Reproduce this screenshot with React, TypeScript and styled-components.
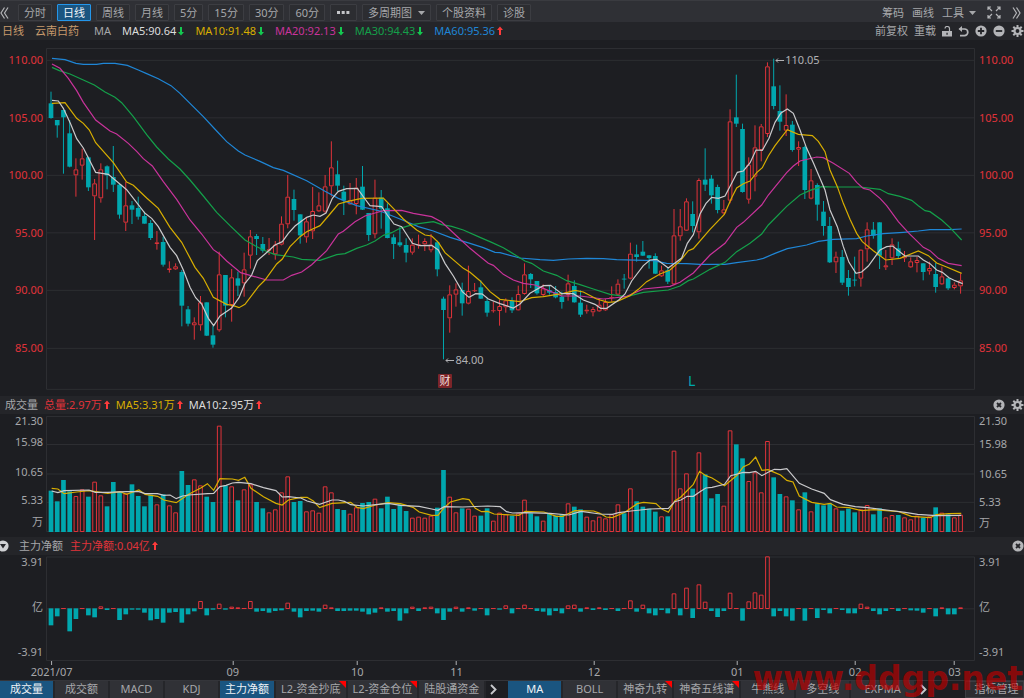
import React from "react";
import styled, { createGlobalStyle, css } from "styled-components";

const color = {
  page: "#1d1e22",
  bar: "#242529",
  tool: "#2f3035",
  tab: "#2c2d31",
  line: "#2d2e32",
  text: "#a6a7aa",
  red: "#e0333a",
  hot: "#ff3b3b",
  teal: "#00a7ae",
  white: "#dcdcdc",
  curve: "#cacacc",
  yellow: "#d8ae00",
  pink: "#c9339b",
  green: "#14a04a",
  blue: "#1f86d6",
  active: "#1a5580",
};

const GlobalStyle = createGlobalStyle`
  *, *::before, *::after { box-sizing: border-box; }
  body {
    margin: 0;
    background: ${color.page};
    color: ${color.text};
    font: 11px/16px "Noto Sans", "Noto Sans CJK SC", sans-serif;
    overflow-x: hidden;
  }
  button, a { font: inherit; color: inherit; text-decoration: none; white-space: nowrap; }
  svg { display: block; }
`;

/* ---------- data ---------- */

const FIRST_X = 153;
const STEP = 18.69;
const barX = (i: number) => FIRST_X + i * STEP;

// d = falling, u = rising; then high, body top, body bottom, low
const candleRows = `
d155,190,234,236 d240,240,256,293 d208,210,232,401 d240,280,380,382 u355,388,406,470 u326,355,377,419
d350,352,442,453 u417,430,469,600 u370,388,475,488 d376,379,406,448 d318,411,434,456 d432,434,524,536
u425,496,548,573 d483,496,509,552 d470,504,530,539 d515,528,551,551 d540,549,594,600 u573,607,612,629
d590,606,674,680 u664,685,690,698 u670,679,688,690 d690,696,797,859 d798,808,851,859 u832,847,856,899
u768,787,856,872 d787,787,887,888 d857,886,914,923 u635,703,871,875 d705,705,797,832 u687,712,795,845
d695,715,737,768 u638,688,730,770 u570,589,647,686 d582,588,597,645 d591,612,632,638 u594,628,632,645
u603,614,643,659 u529,551,614,616 u405,470,553,565 d449,477,510,542 d523,523,586,611 u532,544,592,608
u441,513,574,597 u457,496,514,516 u405,439,515,519 u304,382,439,470 d362,403,437,453 d437,455,481,525
u429,481,493,495 u414,443,492,523 d378,440,509,510 d519,519,585,603 u419,473,583,595 d450,473,506,566
d490,505,594,595 d583,592,612,657 d562,607,616,621 d595,615,638,667 u595,614,638,644 u584,613,616,626
u595,603,613,633 u582,614,631,637 d602,607,688,709 d770,776,810,958 u736,763,835,878 u730,748,764,800
d728,750,790,827 u677,753,791,793 u729,751,752,756 d721,742,776,777 d775,783,818,830 u785,811,812,818
u780,798,813,857 u775,781,802,818 d772,782,811,819 u737,762,811,812 u670,703,762,764 d699,702,718,744
d723,723,760,764 u733,745,765,769 d738,750,758,764 d738,756,772,775 d755,770,786,806 u704,730,765,782
d721,738,787,788 d751,788,824,831 u794,809,814,821 u801,807,817,829 u777,794,814,816 u777,786,811,813
u739,771,773,785 u718,731,764,767 d702,716,718,746 u608,641,716,718 d614,643,651,665 d603,635,647,648
d645,646,654,686 d640,648,701,702 u677,691,709,711 d682,691,725,732 u507,586,733,736 u507,559,589,602
u475,484,572,573 d484,522,558,577 u415,420,577,596 d325,419,434,453 d405,416,466,491 d434,441,510,520
u480,508,520,524 u208,244,482,490 d104,232,251,261 d251,267,456,458 u352,374,479,491 u256,322,410,454
u252,259,330,364 u67,79,282,291 d56,139,198,208 d136,213,245,272 u163,255,272,288 d243,254,330,335
u304,321,329,378 d317,321,450,477 u387,421,476,478 d430,435,494,542 d483,515,558,587 d531,558,667,669
u635,650,667,699 d630,651,728,735 d690,714,741,767 d650,719,721,739 u628,629,716,740 u547,568,628,665
d546,569,587,596 d547,547,647,687 u630,676,682,690 u595,613,655,675 d605,625,648,655 u633,648,655,666
u652,664,682,684 u650,660,669,697 d670,670,696,721 u665,684,694,704 d669,702,741,758 u680,709,733,735
d713,715,745,750 u727,734,744,748 u700,721,739,761`;

const candles = candleRows
  .trim()
  .split(/\s+/)
  .map((row) => {
    const [high, top, bottom, low] = row.slice(1).split(",").map(Number);
    return { up: row[0] === "u", high, top, bottom, low };
  });

const priceAverages = [
  {
    stroke: color.blue,
    points:
      "156,55 195,59 228,70 250,73 290,73 310,70 345,70 382,76 415,90 440,101 475,116 513,137 540,160 570,190 610,230 650,273 680,305 715,333 735,345 780,364 820,383 850,391 920,422 975,454 1015,475 1070,497 1140,513 1200,537 1255,560 1300,573 1350,592 1410,610 1450,623 1485,637 1500,638 1560,654 1620,659 1660,661 1705,657 1760,655 1810,656 1850,659 1960,662 2000,670 2060,671 2100,673 2175,673 2210,668 2270,660 2290,655 2325,640 2362,626 2420,615 2455,604 2500,598 2570,596 2600,588 2650,581 2710,577 2755,573 2790,569 2850,569 2885,567",
  },
  {
    stroke: color.green,
    points:
      "156,82 178,92 210,102 250,120 283,135 315,156 345,172 365,188 400,230 440,284 470,321 505,357 540,387 570,420 610,468 650,517 690,557 735,600 765,617 790,630 825,644 880,651 905,658 960,661 1010,644 1035,641 1070,625 1100,615 1125,603 1150,586 1175,578 1200,565 1240,553 1300,545 1325,554 1355,559 1390,570 1440,592 1475,607 1510,623 1575,663 1595,670 1630,693 1670,706 1700,722 1740,734 1780,747 1830,763 1880,770 1930,757 2005,750 2040,738 2065,722 2080,717 2130,688 2175,667 2210,635 2250,610 2285,582 2305,555 2360,499 2400,465 2430,451 2465,440 2500,441 2580,441 2640,448 2665,461 2700,469 2735,481 2755,497 2775,512 2790,515 2825,540 2850,563 2885,600",
  },
  {
    stroke: color.pink,
    points:
      "156,72 180,85 205,115 230,152 250,187 287,240 330,273 350,282 385,310 410,334 430,356 457,378 490,425 530,478 570,540 605,582 640,629 660,643 680,663 722,698 750,706 800,720 850,720 875,706 905,696 935,674 980,632 1015,582 1030,574 1065,545 1095,528 1125,519 1150,512 1205,511 1240,520 1295,530 1325,546 1370,588 1410,625 1465,670 1480,676 1510,703 1540,720 1570,730 1605,735 1630,745 1685,768 1740,768 1810,777 1840,774 1880,769 1930,747 2010,739 2040,727 2080,699 2130,645 2175,610 2210,562 2230,547 2285,495 2305,465 2360,398 2380,378 2400,363 2450,351 2470,353 2500,370 2548,400 2570,427 2590,445 2610,450 2640,475 2660,497 2695,545 2725,578 2770,622 2790,632 2815,655 2845,670 2885,677",
  },
  {
    stroke: color.yellow,
    points:
      "156,190 195,188 230,235 250,250 268,270 287,308 340,368 380,426 400,436 440,474 475,505 510,562 545,607 585,682 610,715 640,772 680,793 700,797 717,803 735,793 775,740 795,720 830,672 847,657 870,620 900,590 920,575 960,557 990,522 1015,492 1040,485 1085,475 1150,474 1180,505 1210,537 1250,570 1275,585 1295,588 1315,607 1335,638 1390,685 1410,697 1440,722 1470,755 1500,778 1560,785 1595,773 1630,770 1690,760 1725,751 1750,756 1790,777 1825,787 1850,785 1890,767 1915,748 1940,725 1980,702 2010,690 2040,663 2065,632 2080,626 2130,568 2173,523 2195,473 2210,444 2230,431 2250,423 2270,398 2287,383 2305,348 2325,317 2362,269 2395,283 2437,287 2455,304 2475,335 2490,390 2512,440 2530,490 2550,538 2570,580 2587,605 2620,632 2657,660 2700,655 2755,633 2785,647 2810,669 2840,681 2885,700",
  },
  {
    stroke: color.curve,
    points:
      "156,181 175,183 190,205 212,252 230,296 250,324 287,397 325,403 380,449 435,520 455,535 475,560 510,622 530,647 550,690 570,742 587,773 605,792 625,835 641,857 660,828 695,804 717,773 735,730 755,705 772,662 795,642 825,615 847,605 865,580 885,558 920,532 940,525 960,529 978,519 997,475 1015,454 1040,446 1072,445 1095,477 1110,497 1145,500 1162,525 1182,552 1205,560 1237,610 1260,617 1295,616 1315,630 1335,670 1360,708 1387,755 1407,772 1427,761 1447,762 1465,777 1500,791 1540,804 1560,792 1590,760 1630,737 1652,736 1685,761 1720,761 1750,780 1785,793 1802,805 1820,805 1855,781 1875,762 1895,723 1930,677 1950,660 1970,658 2005,684 2045,654 2062,610 2080,584 2100,522 2118,490 2135,472 2155,475 2175,468 2195,430 2212,397 2230,393 2250,369 2268,330 2287,331 2307,295 2325,247 2343,219 2362,207 2380,220 2400,270 2420,325 2440,368 2475,450 2490,510 2512,560 2530,620 2547,667 2568,700 2585,696 2605,678 2640,630 2660,620 2678,618 2715,648 2755,648 2770,660 2790,671 2810,690 2827,697 2847,713 2865,722 2888,731",
  },
];

const VOLUME_BASE = 411;
const volumeTops = [
  287, 319, 255, 289, 303, 283, 305, 260, 301, 334, 261, 291, 295, 268, 303, 334, 299, 328, 298, 331, 352, 228, 270, 253,
  271, 305, 321, 92, 272, 274, 316, 283, 268, 321, 340, 352, 343, 292, 244, 321, 318, 349, 346, 353, 274, 292, 342, 345,
  356, 337, 324, 321, 311, 340, 305, 342, 328, 348, 368, 365, 368, 362, 338, 225, 305, 352, 340, 341, 362, 362, 340, 377,
  353, 358, 362, 355, 314, 355, 364, 377, 355, 362, 358, 325, 335, 343, 365, 376, 365, 370, 358, 328, 355, 280, 319, 335,
  341, 350, 364, 364, 167, 280, 235, 281, 172, 238, 310, 297, 332, 106, 148, 190, 258, 232, 292, 138, 247, 297, 304, 316,
  343, 292, 349, 325, 331, 325, 340, 347, 341, 352, 343, 330, 358, 340, 367, 360, 360, 367, 373, 362, 368, 364, 337, 353,
  358, 367, 359,
];

// bar index, height on the volume scale
const volumeAverages = [
  {
    stroke: color.yellow,
    series:
      "0,280 1,282 2,296 4,291 6,287 9,295 11,290 12,298 14,285 15,298 17,304 18,315 20,323 22,298 24,278 25,266 26,286 27,251 29,252 30,256 31,247 32,280 34,305 36,325 37,330 38,315 40,307 41,307 42,318 43,338 45,325 48,322 49,337 50,341 52,330 54,323 56,326 58,337 59,351 61,361 62,361 63,338 64,321 66,311 67,314 68,340 69,350 70,349 71,357 75,361 76,349 79,351 81,364 82,364 84,347 87,348 88,355 89,366 90,368 92,352 94,326 95,322 97,326 98,343 99,352 100,318 101,306 103,268 104,229 105,242 106,249 108,272 110,241 111,216 112,207 113,186 114,226 115,224 116,232 117,240 118,256 119,261 120,303 122,322 124,328 125,325 126,336 128,338 130,347 132,344 136,350 138,364 141,368 142,359 144,356 146,355",
  },
  {
    stroke: color.curve,
    series:
      "0,288 1,293 2,287 6,285 7,292 9,292 12,290 14,290 15,296 17,296 18,301 19,300 20,311 21,303 22,300 25,296 26,295 27,275 28,271 29,264 30,262 32,266 34,278 36,287 37,306 38,305 40,309 41,318 43,328 45,315 46,315 47,319 48,329 50,333 52,329 54,325 56,331 59,334 61,342 62,346 63,335 66,336 70,333 72,335 73,350 74,354 76,353 80,355 83,360 85,349 88,357 90,358 91,353 93,348 96,342 99,340 100,320 101,315 102,304 103,304 104,291 105,279 106,277 108,268 109,242 111,232 112,233 113,229 114,242 115,232 116,223 117,224 118,221 120,265 122,282 124,295 125,314 127,328 129,335 131,338 134,345 137,352 139,358 142,362 146,361",
  },
];

const FLOW_BASE = 219;
const flows = [
  -51, -24, 1, -69, -32, 1, -21, -27, 6, -5, 1, -35, -18, -4, -4, -13, -36, -32, -43, -13, -11, -43, -18, -9, 22, -21, -4,
  14, -4, 5, 3, 1, 22, -10, -8, -13, -8, -6, 17, -10, -27, -8, -7, -10, 11, 3, -8, -8, -7, -7, -10, -18, -13, 3, -10, -8,
  -37, -15, 5, -8, 3, 5, -15, -35, -10, 5, -10, 3, -7, 1, -21, 1, -4, 9, -15, 1, 11, 1, -8, -10, -21, -8, -15, 9, 11, -10,
  3, -5, 3, -5, 1, -8, 1, 24, -10, 11, -15, -21, -5, -15, 45, -21, 62, -29, 72, 20, -8, -26, -8, 47, 1, -37, 21, 48, 41,
  156, -24, -8, -24, -37, 1, -37, 1, -29, -5, -15, 1, -5, -15, -15, 14, 5, -8, -18, -8, 1, -8, 1, -6, -7, -13, 1, -24, 3,
  -18, -18, 3,
];

const months = [
  { at: 0.6, label: "2021/07" },
  { at: 20.1, label: "09" },
  { at: 33.5, label: "10" },
  { at: 44.2, label: "11" },
  { at: 59, label: "12" },
  { at: 74.4, label: "01" },
  { at: 87.1, label: "02" },
  { at: 97.8, label: "03" },
];

/* ---------- frame ---------- */

const Page = styled.div`
  position: relative;
  display: flex;
  flex-direction: column;
  min-height: 100vh;
  overflow: hidden;
`;

const Toolbar = styled.header`
  display: flex;
  align-items: center;
  justify-content: space-between;
  height: 22px;
  padding: 2px 3px 0 0;
  background: ${color.tool};
  border-top: 1px solid #3a3b40;
`;

const Group = styled.div<{ $gap: number }>`
  display: flex;
  align-items: center;
  gap: ${(p) => p.$gap}px;
`;

const IconButton = styled.button`
  display: flex;
  padding: 0;
  border: 0;
  background: none;
  color: #b4b5b8;
`;

const PeriodButton = styled.button<{ $active?: boolean }>`
  display: flex;
  align-items: center;
  gap: 6px;
  height: 17px;
  padding: 0 5px;
  border: 1px solid ${(p) => (p.$active ? "#2496ea" : "#3c3d42")};
  border-radius: 1px;
  background: ${(p) => (p.$active ? color.active : "#2c2d31")};
  color: ${(p) => (p.$active ? "#f0f4f8" : color.text)};
`;

const MoreButton = styled(PeriodButton)`
  padding: 0 6px;
`;

const TextButton = styled.button`
  display: flex;
  align-items: center;
  gap: 5px;
  padding: 0;
  border: 0;
  background: none;
`;

const InfoBar = styled.div<{ $start: number }>`
  display: flex;
  align-items: center;
  justify-content: space-between;
  height: 18px;
  padding-left: ${(p) => p.$start}px;
  background: ${color.bar};
  white-space: nowrap;
`;

const Reading = styled.span<{ $color?: string }>`
  display: flex;
  align-items: center;
  gap: 2px;
  color: ${(p) => p.$color ?? color.text};
`;

const StudyName = styled.span`
  margin-left: 4px;
`;

const Panel = styled.section<{ $top: number; $bottom: number }>`
  display: grid;
  grid-template-columns: 46px 1fr 49px;
  padding: ${(p) => p.$top}px 0 ${(p) => p.$bottom}px;
`;

const Plot = styled.div`
  position: relative;
`;

const Canvas = styled.svg<{ $height: number }>`
  width: 100%;
  height: ${(p) => p.$height}px;

  line, rect, polyline { vector-effect: non-scaling-stroke; }
`;

const axisSide = css<{ $side: "left" | "right" }>`
  text-align: ${(p) => (p.$side === "left" ? "right" : "left")};
  padding-${(p) => (p.$side === "left" ? "right: 3px" : "left: 4px")};
`;

const PriceAxis = styled.div<{ $side: "left" | "right" }>`
  ${axisSide}
  display: flex;
  flex-direction: column;
  justify-content: space-between;
  margin: 4px 0 34px;
  color: ${color.red};
`;

const VolumeAxis = styled.div<{ $side: "left" | "right"; $rows: string }>`
  ${axisSide}
  display: grid;
  grid-template-rows: ${(p) => p.$rows};
  align-items: center;
`;

const FlowAxis = styled.div<{ $side: "left" | "right" }>`
  ${axisSide}
  display: flex;
  flex-direction: column;
  justify-content: space-between;
  margin-bottom: 3px;
  line-height: 12px;
`;

const Callout = styled.span<{ $left: string; $top: number }>`
  position: absolute;
  left: ${(p) => p.$left};
  top: ${(p) => p.$top}px;
  display: flex;
  align-items: center;
  gap: 1px;
  color: #b0b1b4;
`;

const ReportBadge = styled.a`
  position: absolute;
  left: 42.2%;
  top: 326px;
  width: 14px;
  height: 14px;
  border-radius: 1px;
  background: #7c2529;
  color: #f0dcdc !important;
  line-height: 14px;
  text-align: center;
`;

const EventMark = styled.a`
  position: absolute;
  left: 69.1%;
  top: 325px;
  color: ${color.teal} !important;
  font-size: 14px;
`;

const TimeAxis = styled.div`
  position: relative;
  height: 19px;
  margin: 0 49px 0 46px;
`;

const Month = styled.span<{ $at: number }>`
  position: absolute;
  left: ${(p) => p.$at}%;
  display: flex;
  flex-direction: column;
  align-items: center;
  transform: translateX(-50%);
  line-height: 14px;

  &::before {
    content: "";
    width: 1px;
    height: 4px;
    background: #b0b1b4;
  }
`;

const Footer = styled.footer`
  display: flex;
  height: 18px;
  border-top: 1px solid #34353a;
`;

const TabList = styled.nav<{ $gapAfter?: boolean }>`
  display: flex;
  align-items: stretch;
  margin-right: ${(p) => (p.$gapAfter ? 7 : 0)}px;
`;

const Tab = styled.button<{ $active?: boolean; $wide?: boolean }>`
  position: relative;
  min-width: ${(p) => (p.$wide ? 65 : 55)}px;
  padding: 0 5px 2px;
  border: 0;
  border-right: 2px solid #25262a;
  background: ${(p) => (p.$active ? color.active : "#303136")};
  color: ${(p) => (p.$active ? "#eef2f6" : color.text)};
  line-height: 15px;
`;

const HotCorner = styled.i`
  position: absolute;
  top: 0;
  right: 0;
  border-top: 7px solid #ff0000;
  border-left: 7px solid transparent;
`;

const NextButton = styled(IconButton)`
  width: 15px;
  align-items: center;
  justify-content: center;
`;

const ManageButton = styled.button`
  margin-left: auto;
  width: 59px;
  padding: 0 4px 1px 8px;
  border: 1px solid #3c3d42;
  background: #2c2d31;
  line-height: 14px;
`;

const Watermark = styled.div`
  position: absolute;
  right: 1px;
  bottom: 0;
  color: rgba(190, 0, 0, 0.68);
  font: bold 33px/38px "DejaVu Sans", sans-serif;
  pointer-events: none;
`;

/* ---------- icons ---------- */

const Trend = ({ up }: { up?: boolean }) => (
  <svg width="6" height="10" viewBox="0 0 6 10" fill={up ? color.hot : "#14c850"}>
    <path d={up ? "M3 0.5 6 4H4v5H2V4H0z" : "M3 9.5 6 6H4V1H2v5H0z"} />
  </svg>
);

const Caret = () => (
  <svg width="7" height="4" viewBox="0 0 7 4" fill="currentColor">
    <path d="M0 0h7L3.5 4z" />
  </svg>
);

const DoubleChevron = ({ left }: { left?: boolean }) => (
  <svg width="9" height="12" viewBox="0 0 9 12" fill="none" stroke="currentColor" strokeWidth="1.2">
    <path d={left ? "M4.5 .5 1 6l3.500 5.500M8 .5 4.500 6 8 11.500" : "M1 .5 4.500 6 1 11.500M4.500 .5 8 6l-3.500 5.500"} />
  </svg>
);

const Chevron = () => (
  <svg width="7" height="11" viewBox="0 0 7 11" fill="none" stroke="#c8c9cc" strokeWidth="1.900">
    <path d="M1 1l4.500 4.500L1 10" />
  </svg>
);

const Dots = () => (
  <svg width="13" height="3" viewBox="0 0 13 3" fill="#c4c5c8">
    <path d="M0 0h3v3H0zM4.700 0h3v3h-3zM9.400 0h3v3h-3z" />
  </svg>
);

const Expand = () => (
  <svg width="14" height="13" viewBox="0 0 14 13" fill="none" stroke="currentColor" strokeWidth="1.200">
    <path d="M1 4V1h3M1 1l4 4M10 1h3v3M13 1 9 5M1 9v3h3M1 12l4-4M10 12h3V9M13 12 9 8" />
  </svg>
);

const Lock = () => (
  <svg width="10" height="11" viewBox="0 0 10 11">
    <path d="M3 2.500a2.200 2.200 0 0 1 4.500.5v2" fill="none" stroke="currentColor" strokeWidth="1.200" />
    <path d="M0 5h10v5.500H0z" fill="currentColor" />
    <path d="M4.400 6.800h1.300v2H4.400z" fill={color.bar} />
  </svg>
);

const Undo = () => (
  <svg width="11" height="11" viewBox="0 0 11 11" fill="none" stroke="currentColor" strokeWidth="1.700">
    <path d="M1.500 3h5a3.300 3.300 0 0 1 0 6.600H2" />
    <path d="M4 0 .5 3 4 6z" fill="currentColor" stroke="none" />
  </svg>
);

const Round = ({ mark }: { mark: string }) => (
  <svg width="12" height="12" viewBox="0 0 12 12">
    <circle cx="6" cy="6" r="5.600" fill="currentColor" />
    <path d={mark} fill="none" stroke={color.bar} strokeWidth="1.800" />
  </svg>
);

const PLUS = "M6 2.800v6.400M2.800 6h6.400";
const MINUS = "M2.800 6h6.400";
const CROSS = "M4 4l4 4M8 4 4 8";

const Collapse = () => (
  <svg width="9" height="12" viewBox="3 0 9 12">
    <circle cx="6" cy="6" r="5.600" fill="#d0d1d4" />
    <path d="M3 4h6L6 8.500z" fill={color.bar} />
  </svg>
);

const Gear = () => (
  <svg width="13" height="12" viewBox="-6.500 -6 13 12" stroke="currentColor">
    <circle r="3" fill="none" strokeWidth="2.200" />
    <path
      d="M0-3.500V-6M0 3.500V6M-3.500 0H-6M3.500 0H6M-2.500-2.500-4.200-4.200M2.500 2.500 4.200 4.200M-2.500 2.500-4.200 4.200M2.500-2.500 4.200-4.200"
      strokeWidth="2"
    />
  </svg>
);

const CalloutArrow = () => (
  <svg width="9" height="5" viewBox="0 0 9 5" fill="none" stroke="currentColor">
    <path d="M9 2.500H1M3 .5 1 2.500l2 2" />
  </svg>
);

/* ---------- charts ---------- */

const Frame = ({ top, bottom, rows }: { top: number; bottom: number; rows: number[] }) => (
  <g stroke={color.line} fill="none">
    <rect x="139.500" y={top} width="2784" height={bottom - top} strokeWidth="1" />
    {rows.map((y) => (
      <line key={y} x1="139" x2="2922" y1={y} y2={y} />
    ))}
  </g>
);

const Bar = ({ i, up, top, bottom }: { i: number; up: boolean; top: number; bottom: number }) =>
  up && bottom - top > 3 ? (
    <rect
      x={barX(i) - 5.5}
      width="11"
      y={top + 1.5}
      height={Math.max(bottom - top - 3, 1)}
      fill="none"
      stroke={color.red}
      strokeWidth="1"
    />
  ) : (
    <rect x={barX(i) - 7} width="14" y={top} height={Math.max(bottom - top, 2.5)} fill={up ? color.red : color.teal} />
  );

const PriceChart = () => (
  <Canvas $height={342} viewBox="138 24 2787 1026" preserveAspectRatio="none" role="img" aria-label="日线">
    <Frame top={25.5} bottom={1048} rows={[61, 233.5, 406, 578.5, 751, 925]} />
    {candles.map((c, i) => (
      <g key={i}>
        <g stroke={c.up ? color.red : color.teal}>
          <line x1={barX(i)} x2={barX(i)} y1={c.high} y2={c.up ? c.top : c.low} />
          {c.up && <line x1={barX(i)} x2={barX(i)} y1={c.bottom} y2={c.low} />}
        </g>
        <Bar i={i} up={c.up} top={c.top} bottom={c.bottom} />
      </g>
    ))}
    {priceAverages.map((a) => (
      <polyline key={a.stroke} points={a.points} fill="none" stroke={a.stroke} strokeWidth="1.2" />
    ))}
  </Canvas>
);

const VolumeChart = () => (
  <Canvas $height={116} viewBox="138 63 2787 348" preserveAspectRatio="none" role="img" aria-label="成交量">
    <Frame top={64.5} bottom={409.5} rows={[148.5, 237, 322]} />
    {volumeTops.map((top, i) => (
      <Bar key={i} i={i} up={candles[i].up} top={top} bottom={VOLUME_BASE} />
    ))}
    {volumeAverages.map((a) => (
      <polyline
        key={a.stroke}
        points={a.series
          .split(" ")
          .map((p) => p.split(",").map(Number))
          .map(([i, y]) => `${barX(i) + 2},${y}`)
          .join(" ")}
        fill="none"
        stroke={a.stroke}
        strokeWidth="1.2"
      />
    ))}
  </Canvas>
);

const FlowChart = () => (
  <Canvas $height={105} viewBox="138 62 2787 315" preserveAspectRatio="none" role="img" aria-label="主力净额">
    <Frame top={65} bottom={375.5} rows={[220.5]} />
    {flows.map((v, i) => (
      <Bar key={i} i={i} up={v > 0} top={v > 0 ? FLOW_BASE - v : FLOW_BASE} bottom={v > 0 ? FLOW_BASE + 2 : FLOW_BASE - v} />
    ))}
  </Canvas>
);

const Labels = ({ values }: { values: string[] }) => (
  <>
    {values.map((v) => (
      <span key={v}>{v}</span>
    ))}
  </>
);

const prices = ["110.00", "105.00", "100.00", "95.00", "90.00", "85.00"];
const volumes = ["21.30", "15.98", "10.65", "5.33", "万"];
const flowScale = ["3.91", "亿", "-3.91"];
const periods = ["分时", "日线", "周线", "月线", "5分", "15分", "30分", "60分"];

const studies = [
  { name: "成交量", active: true },
  { name: "成交额" },
  { name: "MACD" },
  { name: "KDJ" },
  { name: "主力净额", active: true },
  { name: "L2-资金抄底", hot: true },
  { name: "L2-资金仓位", hot: true },
  { name: "陆股通资金" },
];

const overlays = [
  { name: "MA", active: true },
  { name: "BOLL" },
  { name: "神奇九转", hot: true },
  { name: "神奇五线谱", hot: true },
  { name: "牛熊线" },
  { name: "多空线" },
  { name: "EXPMA", wide: true },
];

type TabItem = { name: string; active?: boolean; hot?: boolean; wide?: boolean };

const Tabs = ({ items, gapAfter }: { items: TabItem[]; gapAfter?: boolean }) => (
  <TabList $gapAfter={gapAfter}>
    {items.map((t) => (
      <Tab key={t.name} $active={t.active} $wide={t.wide}>
        {t.name}
        {t.hot && <HotCorner />}
      </Tab>
    ))}
    <NextButton aria-label="更多">
      <Chevron />
    </NextButton>
  </TabList>
);

export default function App() {
  return (
    <Page>
      <GlobalStyle />
      <Toolbar>
        <Group $gap={9}>
          <IconButton aria-label="收起">
            <DoubleChevron left />
          </IconButton>
          <Group $gap={5}>
            {periods.map((p) => (
              <PeriodButton key={p} $active={p === "日线"}>
                {p}
              </PeriodButton>
            ))}
            <MoreButton aria-label="更多周期">
              <Dots />
            </MoreButton>
            <PeriodButton>
              多周期图
              <Caret />
            </PeriodButton>
            <PeriodButton>个股资料</PeriodButton>
            <PeriodButton>诊股</PeriodButton>
          </Group>
        </Group>
        <Group $gap={11}>
          <Group $gap={8}>
            <TextButton>筹码</TextButton>
            <TextButton>画线</TextButton>
            <TextButton>
              工具
              <Caret />
            </TextButton>
          </Group>
          <IconButton aria-label="全屏">
            <Expand />
          </IconButton>
          <IconButton aria-label="展开">
            <DoubleChevron />
          </IconButton>
        </Group>
      </Toolbar>

      <InfoBar $start={2}>
        <Group $gap={11}>
          <Reading $color="#c79a6c">日线</Reading>
          <Reading $color="#c79a6c">云南白药</Reading>
          <StudyName>MA</StudyName>
          <Reading $color={color.white}>MA5:90.64<Trend /></Reading>
          <Reading $color={color.yellow}>MA10:91.48<Trend /></Reading>
          <Reading $color={color.pink}>MA20:92.13<Trend /></Reading>
          <Reading $color={color.green}>MA30:94.43<Trend /></Reading>
          <Reading $color={color.blue}>MA60:95.36<Trend up /></Reading>
        </Group>
        <Group $gap={6}>
          <TextButton>前复权</TextButton>
          <TextButton>重载</TextButton>
          <IconButton aria-label="锁定"><Lock /></IconButton>
          <IconButton aria-label="撤销"><Undo /></IconButton>
          <IconButton aria-label="放大"><Round mark={PLUS} /></IconButton>
          <IconButton aria-label="缩小"><Round mark={MINUS} /></IconButton>
          <IconButton aria-label="设置"><Gear /></IconButton>
        </Group>
      </InfoBar>

      <Panel $top={8} $bottom={6}>
        <PriceAxis $side="left"><Labels values={prices} /></PriceAxis>
        <Plot>
          <PriceChart />
          <Callout $left="78.5%" $top={4}><CalloutArrow />110.05</Callout>
          <Callout $left="43%" $top={304}><CalloutArrow />84.00</Callout>
          <ReportBadge href="#report">财</ReportBadge>
          <EventMark href="#event">L</EventMark>
        </Plot>
        <PriceAxis $side="right"><Labels values={prices} /></PriceAxis>
      </Panel>

      <InfoBar $start={5}>
        <Group $gap={6}>
          <Reading>成交量</Reading>
          <Reading $color={color.red}>总量:2.97万<Trend up /></Reading>
          <Reading $color={color.yellow}>MA5:3.31万<Trend up /></Reading>
          <Reading $color={color.white}>MA10:2.95万<Trend up /></Reading>
        </Group>
        <Group $gap={6}>
          <IconButton aria-label="关闭成交量"><Round mark={CROSS} /></IconButton>
          <IconButton aria-label="成交量设置"><Gear /></IconButton>
        </Group>
      </InfoBar>

      <Panel $top={2} $bottom={5}>
        <VolumeAxis $side="left" $rows="10px 32px 28px 28px 16px"><Labels values={volumes} /></VolumeAxis>
        <Plot>
          <VolumeChart />
        </Plot>
        <VolumeAxis $side="right" $rows="10px 36px 24px 32px 10px"><Labels values={volumes} /></VolumeAxis>
      </Panel>

      <InfoBar $start={0}>
        <Group $gap={7}>
          <Group $gap={10}>
            <IconButton aria-label="折叠"><Collapse /></IconButton>
            <Reading>主力净额</Reading>
          </Group>
          <Reading $color={color.red}>主力净额:0.04亿<Trend up /></Reading>
        </Group>
        <IconButton aria-label="关闭主力净额"><Round mark={CROSS} /></IconButton>
      </InfoBar>

      <Panel $top={1} $bottom={0}>
        <FlowAxis $side="left"><Labels values={flowScale} /></FlowAxis>
        <Plot>
          <FlowChart />
        </Plot>
        <FlowAxis $side="right"><Labels values={flowScale} /></FlowAxis>
      </Panel>

      <TimeAxis>
        {months.map((m) => (
          <Month key={m.label} $at={m.at}>{m.label}</Month>
        ))}
      </TimeAxis>

      <Footer>
        <Tabs items={studies} gapAfter />
        <Tabs items={overlays} />
        <ManageButton>指标管理</ManageButton>
      </Footer>
      <Watermark>www.ddgp.net</Watermark>
    </Page>
  );
}
